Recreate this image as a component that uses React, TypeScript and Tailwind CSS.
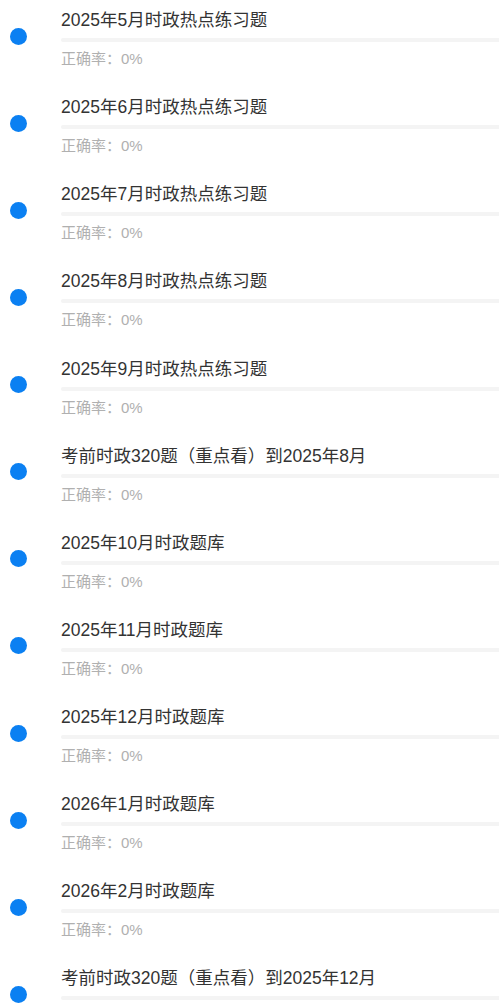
const items = [
  '2025年5月时政热点练习题',
  '2025年6月时政热点练习题',
  '2025年7月时政热点练习题',
  '2025年8月时政热点练习题',
  '2025年9月时政热点练习题',
  '考前时政320题（重点看）到2025年8月',
  '2025年10月时政题库',
  '2025年11月时政题库',
  '2025年12月时政题库',
  '2026年1月时政题库',
  '2026年2月时政题库',
  '考前时政320题（重点看）到2025年12月',
]

function Row({ title }: { title: string }) {
  return (
    <div className="flex h-[87.14px] shrink-0">
      <div className="w-[61px] shrink-0">
        <div className="ml-[10px] mt-[27.5px] h-[17px] w-[17px] rounded-full bg-[#0b80f2]" />
      </div>
      <div className="flex-1 min-w-0 pt-[8px]">
        <div className="text-[17.5px] leading-[24px] text-[#333333] whitespace-nowrap">{title}</div>
        <div className="mt-[6px] h-[4px] rounded-l-full bg-[#f4f4f4]" />
        <div className="mt-[7px] text-[15px] leading-[20px] text-[#b0b0b0]">正确率：0%</div>
      </div>
    </div>
  )
}

export default function App() {
  return (
    <div
      className="h-[1005px] w-full overflow-hidden bg-white flex flex-col"
      style={{ fontFamily: '"Liberation Sans", "Noto Sans CJK SC", sans-serif' }}
    >
      {items.map((t, i) => (
        <Row key={i} title={t} />
      ))}
    </div>
  )
}
